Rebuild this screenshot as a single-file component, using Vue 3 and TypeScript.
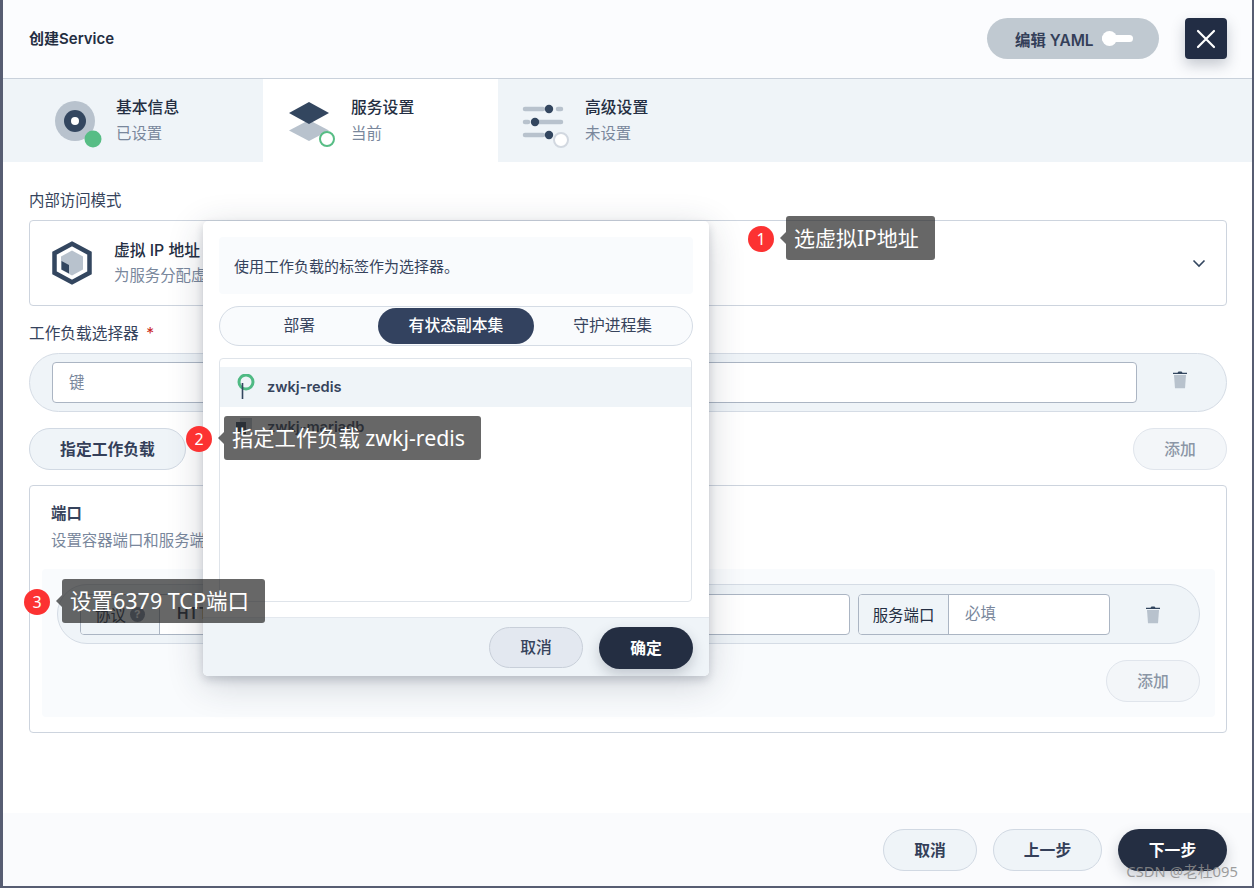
<script setup lang="ts">
import { ref } from 'vue';

const workloadTabs = ['部署', '有状态副本集', '守护进程集'];
const activeTab = ref(1);

const notes = [
  { id: 1, text: '选虚拟IP地址' },
  { id: 2, text: '指定工作负载 zwkj-redis' },
  { id: 3, text: '设置6379 TCP端口' },
];
</script>

<template>
  <div class="screen">
    <div class="modal">
      <header class="modal-header">
        <h1>创建Service</h1>
        <div class="header-actions">
          <button type="button" class="btn-yaml">
            编辑 YAML
            <span class="toggle"><i /></span>
          </button>
          <button type="button" class="btn-close" aria-label="关闭">
            <svg width="20" height="20" viewBox="0 0 20 20">
              <path d="M2 2l16 16M18 2L2 18" stroke="#fff" stroke-width="2.2" stroke-linecap="round" />
            </svg>
          </button>
        </div>
      </header>

      <nav class="steps">
        <div class="step step-first">
          <svg class="step-icon" width="48" height="48" viewBox="0 0 48 48">
            <circle cx="21" cy="21" r="20" fill="#b8c2cd" />
            <circle cx="21" cy="21" r="11" fill="#33465f" />
            <circle cx="21" cy="21" r="4" fill="#fff" />
            <circle cx="39" cy="39" r="8.5" fill="#57bd85" />
          </svg>
          <div class="step-text">
            <strong>基本信息</strong>
            <span>已设置</span>
          </div>
        </div>
        <div class="step step-active">
          <svg class="step-icon" width="48" height="48" viewBox="0 0 48 48">
            <path d="M1 30.5L21 20l20 10.5L21 41z" fill="#b8c2cd" />
            <path d="M1 13L21 2l20 11-20 11z" fill="#33465f" />
            <circle cx="39" cy="39" r="7" fill="#fff" stroke="#57bd85" stroke-width="2" />
          </svg>
          <div class="step-text">
            <strong>服务设置</strong>
            <span>当前</span>
          </div>
        </div>
        <div class="step step-last">
          <svg class="step-icon" width="48" height="48" viewBox="0 0 48 48">
            <g stroke="#b8c2cd" stroke-width="4.5" stroke-linecap="round">
              <path d="M3 9h18M36 9h3M3 22h3M17 22h22M3 35h18" />
            </g>
            <circle cx="27" cy="9" r="4.2" fill="#33465f" />
            <circle cx="13" cy="22" r="4.2" fill="#33465f" />
            <circle cx="27" cy="35" r="4.2" fill="#33465f" />
            <circle cx="39" cy="40" r="7" fill="#fff" stroke="#d2d8e0" stroke-width="2" />
          </svg>
          <div class="step-text">
            <strong>高级设置</strong>
            <span>未设置</span>
          </div>
        </div>
      </nav>

      <main class="modal-body">
        <label class="field-label">内部访问模式</label>
        <div class="select-box">
          <svg class="hex-icon" width="40" height="44" viewBox="0 0 40 44">
            <path d="M20 2.8L37.5 12.2V31.8L20 41.2L2.5 31.8V12.2z" fill="none" stroke="#33465f" stroke-width="4.5" />
            <path d="M20 9.5L31 15.5V28.5L20 34.5L9 28.5V15.5z" fill="#b8c2cd" />
            <path d="M9.5 20L17 24V32.5L9.5 28.5z" fill="#33465f" />
          </svg>
          <div class="select-text">
            <strong>虚拟 IP 地址</strong>
            <span>为服务分配虚拟 IP 地址</span>
          </div>
          <svg class="chevron" width="14" height="14" viewBox="0 0 14 14">
            <path d="M1.5 4.5L7 10l5.5-5.5" fill="none" stroke="#33465f" stroke-width="1.6" />
          </svg>
        </div>

        <label class="field-label selector-label">工作负载选择器 <em>*</em></label>
        <div class="pill-row">
          <div class="plain-input">键</div>
          <div class="trash-cell trash-raised">
            <svg width="16" height="19" viewBox="0 0 16 19">
              <path d="M2 5h12l-1 13.2H3z" fill="#b8c2cd" />
              <path d="M1 2.8h4.5L6.5 1.4h3l1 1.4H15V4H1z" fill="#33465f" />
            </svg>
          </div>
        </div>

        <div class="action-row">
          <button type="button" class="btn-soft btn-assign">指定工作负载</button>
          <button type="button" class="btn-soft btn-add">添加</button>
        </div>

        <section class="port-box">
          <div class="port-head">
            <strong>端口</strong>
            <span>设置容器端口和服务端口</span>
          </div>
          <div class="port-inner">
            <div class="pill-row port-row">
              <div class="group group-wide">
                <div class="group-label protocol">协议 <i class="help">?</i></div>
                <div class="group-value protocol-value">HTTP</div>
              </div>
              <div class="group group-service">
                <div class="group-label">服务端口</div>
                <div class="group-value placeholder">必填</div>
              </div>
              <div class="trash-cell">
                <svg width="16" height="19" viewBox="0 0 16 19">
                  <path d="M2 5h12l-1 13.2H3z" fill="#b8c2cd" />
                  <path d="M1 2.8h4.5L6.5 1.4h3l1 1.4H15V4H1z" fill="#33465f" />
                </svg>
              </div>
            </div>
            <div class="port-add">
              <button type="button" class="btn-soft btn-add">添加</button>
            </div>
          </div>
        </section>
      </main>

      <footer class="modal-footer">
        <button type="button" class="btn-soft btn-foot">取消</button>
        <button type="button" class="btn-soft btn-foot btn-prev">上一步</button>
        <button type="button" class="btn-dark btn-next">下一步</button>
      </footer>
    </div>

    <div class="dialog" role="dialog">
      <div class="dialog-main">
        <p class="hint">使用工作负载的标签作为选择器。</p>
        <div class="seg">
          <button
            v-for="(tab, i) in workloadTabs"
            :key="tab"
            type="button"
            class="seg-item"
            :class="{ active: i === activeTab }"
            @click="activeTab = i"
          >
            {{ tab }}
          </button>
        </div>
        <div class="list">
          <div class="list-row selected">
            <svg width="22" height="26" viewBox="0 0 22 26">
              <circle cx="12" cy="8" r="7" fill="none" stroke="#4fba84" stroke-width="3" />
              <path d="M8.5 9v16" stroke="#33465f" stroke-width="1.6" />
            </svg>
            <span>zwkj-redis</span>
          </div>
          <div class="list-row">
            <svg width="22" height="22" viewBox="0 0 22 22">
              <rect x="6" y="2" width="12" height="12" fill="#b8c2cd" />
              <rect x="2" y="6" width="10" height="12" fill="#33465f" />
            </svg>
            <span>zwkj-mariadb</span>
          </div>
        </div>
      </div>
      <div class="dialog-footer">
        <button type="button" class="btn-cancel">取消</button>
        <button type="button" class="btn-dark btn-ok">确定</button>
      </div>
    </div>

    <div v-for="note in notes" :key="note.id" class="note" :class="`note-${note.id}`">
      <span class="note-num">{{ note.id }}</span>
      <span class="note-text">{{ note.text }}</span>
    </div>

    <div class="watermark">CSDN @老杜095</div>
  </div>
</template>

<style scoped>
.screen {
  position: relative;
  width: 1254px;
  height: 888px;
  overflow: hidden;
  background: #575d72;
  font-family: Inter, "Noto Sans CJK SC", sans-serif;
  font-size: 15.4px;
  color: #242e42;
}

button {
  font-family: inherit;
  cursor: pointer;
}

.modal {
  display: flex;
  flex-direction: column;
  width: 1249px;
  height: 886px;
  margin-left: 3px;
  background: #fff;
}

.modal-header {
  display: flex;
  align-items: center;
  justify-content: space-between;
  height: 77px;
  padding: 0 25px 1px 26px;
  border-bottom: 1px solid #c9d1db;
  background: #fbfcfe;
  box-sizing: content-box;
}

.modal-header h1 {
  margin: 0 0 2px;
  font-size: 15px;
  font-weight: 600;
  color: #242e42;
}

.header-actions {
  display: flex;
  align-items: center;
  gap: 26px;
}

.btn-yaml {
  display: flex;
  align-items: center;
  gap: 8px;
  width: 172px;
  height: 41px;
  padding: 0 0 0 28px;
  border: none;
  border-radius: 21px;
  background: #c0c9d1;
  color: #343f59;
  font-size: 15.4px;
  font-weight: 600;
}

.toggle {
  position: relative;
  display: block;
  width: 31px;
  height: 7px;
  border-radius: 4px;
  background: #fff;
}

.toggle i {
  position: absolute;
  left: 0;
  top: -4px;
  width: 15px;
  height: 15px;
  border-radius: 50%;
  background: #fff;
}

.btn-close {
  display: flex;
  align-items: center;
  justify-content: center;
  width: 42px;
  height: 41px;
  padding: 0;
  border: none;
  border-radius: 4px;
  background: #222d44;
  box-shadow: 0 6px 14px rgba(36, 46, 66, 0.25);
}

.steps {
  display: flex;
  height: 83px;
  background: #eff4f8;
}

.step {
  position: relative;
  display: flex;
  align-items: center;
  gap: 14px;
}

.step-first {
  width: 260px;
  padding-left: 51px;
  box-sizing: border-box;
}

.step-active {
  width: 235px;
  padding-left: 25px;
  box-sizing: border-box;
  background: #fff;
}

.step-last {
  padding-left: 24px;
}

.step-icon {
  flex: none;
  margin-top: 6px;
}

.step-text {
  display: flex;
  flex-direction: column;
  gap: 6px;
  margin-top: 1px;
}

.step-text strong {
  font-size: 15.8px;
  line-height: 20px;
  font-weight: 500;
}

.step-text span {
  font-size: 15.4px;
  line-height: 20px;
  color: #79879c;
}

.step-active .step-text,
.step-last .step-text {
  margin-left: 1px;
}

.modal-body {
  flex: 1;
  padding: 29px 25px 0 26px;
}

.field-label {
  display: block;
  height: 20px;
  margin-bottom: 9px;
  line-height: 20px;
  color: #36435c;
}

.selector-label {
  margin-top: 18px;
  font-size: 15.7px;
}

.selector-label em {
  margin-left: 3px;
  color: #ca2621;
  font-style: normal;
}

.select-box {
  display: flex;
  align-items: center;
  gap: 22px;
  height: 86px;
  padding: 0 20px 0 22px;
  border: 1px solid #cdd4de;
  border-radius: 4px;
  box-sizing: border-box;
}

.hex-icon {
  flex: none;
}

.select-text {
  display: flex;
  flex: 1;
  flex-direction: column;
  gap: 5px;
}

.select-text strong {
  font-size: 15.8px;
  line-height: 20px;
  font-weight: 500;
}

.select-text span {
  line-height: 20px;
  color: #79879c;
}

.pill-row {
  display: flex;
  align-items: center;
  height: 59px;
  padding-left: 22px;
  border: 1px solid #d5dce5;
  border-radius: 30px;
  background: #eff4f8;
  box-sizing: border-box;
}

.plain-input {
  flex: 1;
  height: 41px;
  padding-left: 16px;
  border: 1px solid #abb5c3;
  border-radius: 4px;
  background: #fff;
  line-height: 39px;
  color: #79879c;
  box-sizing: border-box;
}

.trash-cell {
  display: flex;
  flex: none;
  justify-content: center;
  width: 89px;
  padding-right: 3px;
  box-sizing: border-box;
}

.trash-raised {
  margin-bottom: 6px;
}

.action-row {
  display: flex;
  justify-content: space-between;
  margin-top: 16px;
}

.btn-soft {
  height: 42px;
  padding: 0 0 2px;
  border: 1px solid #d1d9e3;
  border-radius: 21px;
  background: #eff4f8;
  color: #343f59;
  font-size: 15.8px;
  font-weight: 600;
}

.btn-assign {
  width: 157px;
}

.btn-add {
  width: 94px;
  background: #f3f6f9;
  border-color: #e0e5ec;
  color: #8b96a6;
  font-weight: 500;
}

.port-box {
  height: 248px;
  margin-top: 15px;
  padding: 18px 11px 15px 12px;
  border: 1px solid #cdd4de;
  border-radius: 4px;
  box-sizing: border-box;
}

.port-head {
  display: flex;
  flex-direction: column;
  gap: 7px;
  padding-left: 9px;
}

.port-head strong {
  line-height: 20px;
  font-weight: 600;
  color: #36435c;
}

.port-head span {
  line-height: 20px;
  color: #79879c;
}

.port-inner {
  margin-top: 18px;
  padding: 15px;
  border-radius: 4px;
  background: #f9fbfd;
}

.port-row {
  height: 60px;
}

.group {
  display: flex;
  height: 41px;
  border: 1px solid #abb5c3;
  border-radius: 4px;
  background: #fff;
  box-sizing: border-box;
  overflow: hidden;
}

.group-wide {
  flex: 1;
  margin-right: 8px;
}

.group-service {
  flex: none;
  width: 252px;
}

.group-label {
  display: flex;
  flex: none;
  align-items: center;
  justify-content: center;
  width: 90px;
  border-right: 1px solid #abb5c3;
  background: #eff4f8;
  color: #242e42;
  box-sizing: border-box;
}

.protocol {
  width: 79px;
  gap: 4px;
}

.help {
  display: flex;
  align-items: center;
  justify-content: center;
  width: 15px;
  height: 15px;
  border-radius: 50%;
  background: #79879c;
  color: #fff;
  font-size: 11px;
  font-style: normal;
  font-weight: 700;
}

.group-value {
  flex: 1;
  padding-left: 16px;
  line-height: 37px;
}

.protocol-value {
  padding-left: 17px;
  color: #242e42;
  font-weight: 600;
}

.placeholder {
  color: #79879c;
}

.port-add {
  display: flex;
  justify-content: flex-end;
  margin-top: 16px;
}

.modal-footer {
  display: flex;
  justify-content: flex-end;
  gap: 16px;
  height: 73px;
  padding: 16px 25px 0 0;
  background: #fafbfd;
  box-sizing: border-box;
}

.btn-foot {
  width: 94px;
}

.btn-prev {
  width: 109px;
}

.btn-dark {
  height: 42px;
  padding: 0 0 2px;
  border: none;
  border-radius: 21px;
  background: #242e42;
  color: #fff;
  font-size: 15.8px;
  font-weight: 600;
  box-shadow: 0 6px 14px rgba(36, 46, 66, 0.22);
}

.btn-next {
  width: 109px;
}

.dialog {
  position: absolute;
  left: 203px;
  top: 221px;
  display: flex;
  flex-direction: column;
  width: 506px;
  height: 455px;
  border-radius: 5px;
  background: #fff;
  box-shadow: 0 4px 8px rgba(36, 46, 66, 0.18), 0 8px 36px rgba(36, 46, 66, 0.2);
  overflow: hidden;
}

.dialog-main {
  flex: 1;
  padding: 16px 16px 0;
}

.hint {
  height: 57px;
  margin: 0;
  padding-left: 15px;
  border-radius: 4px;
  background: #f9fbfd;
  font-size: 15px;
  line-height: 59px;
  color: #36435c;
}

.seg {
  display: grid;
  grid-template-columns: repeat(3, 1fr);
  height: 40px;
  margin-top: 12px;
  padding: 1px;
  border: 1px solid #d5dce5;
  border-radius: 20px;
  background: #f9fbfd;
  box-sizing: border-box;
}

.seg-item {
  padding: 0 0 3px;
  border: none;
  border-radius: 18px;
  background: transparent;
  color: #36435c;
  font-size: 15.8px;
}

.seg-item.active {
  background: #33425f;
  color: #fff;
  font-weight: 500;
}

.list {
  height: 244px;
  margin-top: 12px;
  margin-right: 1px;
  padding-top: 8px;
  border: 1px solid #dfe4ea;
  border-radius: 4px;
  box-sizing: border-box;
}

.list-row {
  display: flex;
  align-items: center;
  gap: 11px;
  height: 40px;
  padding-left: 14px;
  font-size: 14.6px;
  font-weight: 600;
  color: #36435c;
}

.list-row.selected {
  background: #eff4f8;
}

.list-row svg {
  flex: none;
}

.dialog-footer {
  display: flex;
  justify-content: flex-end;
  gap: 16px;
  height: 59px;
  padding: 9px 16px 0 0;
  border-top: 1px solid #e3e8ee;
  background: #eff4f8;
  box-sizing: border-box;
}

.btn-cancel {
  width: 94px;
  height: 41px;
  padding: 0 0 2px;
  border: 1px solid #c8cfd9;
  border-radius: 21px;
  background: #e3e8f0;
  color: #36435c;
  font-size: 15.8px;
  font-weight: 500;
}

.btn-ok {
  width: 94px;
}

.note {
  position: absolute;
  display: flex;
  align-items: center;
  gap: 12px;
  height: 44px;
  font-family: "Noto Sans", "Noto Sans CJK SC", sans-serif;
  font-size: 21.3px;
  color: #fff;
}

.note-1 {
  left: 748px;
  top: 216px;
  font-size: 21px;
}

.note-2 {
  left: 186px;
  top: 416px;
}

.note-3 {
  left: 24px;
  top: 579px;
  font-size: 21.5px;
}

.note-num {
  display: flex;
  align-items: center;
  justify-content: center;
  width: 26px;
  height: 26px;
  margin-top: 1px;
  border-radius: 50%;
  background: #fc3232;
  font-size: 16px;
}

.note-text {
  position: relative;
  height: 44px;
  padding: 0 16px 0 8px;
  border-radius: 3px;
  background: rgba(38, 38, 38, 0.7);
  line-height: 44px;
  white-space: nowrap;
}

.note-text::before {
  content: "";
  position: absolute;
  left: -6px;
  top: 16px;
  border-top: 6px solid transparent;
  border-bottom: 6px solid transparent;
  border-right: 6px solid rgba(38, 38, 38, 0.7);
}

.watermark {
  position: absolute;
  right: 16px;
  bottom: 7px;
  font-family: "Noto Sans", "Noto Sans CJK SC", sans-serif;
  font-size: 14.8px;
  line-height: 20px;
  color: rgba(140, 140, 140, 0.85);
}
</style>

<style>
html,
body {
  margin: 0;
  background: #575d72;
}
</style>
